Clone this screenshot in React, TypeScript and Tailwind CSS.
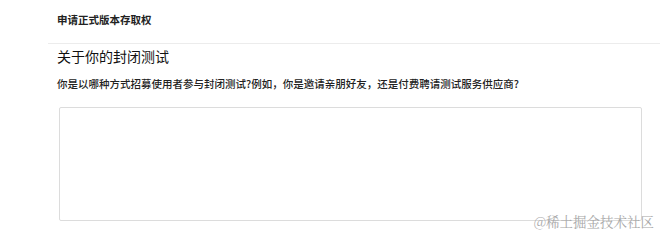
const FONT = "font-['Noto_Sans_CJK_SC','Noto_Sans',sans-serif]";

export default function App() {
  return (
    <div className={`relative h-[237px] w-[660px] overflow-hidden bg-white text-[#222] ${FONT}`}>
      <div className="flex h-[43px] items-center pb-[3px] pl-[57px]">
        <h1 className="text-[10.5px] font-bold leading-[14px]">申请正式版本存取权</h1>
      </div>
      <div className="ml-[48px] border-t border-[#ececec]" />

      <section className="pl-[57px]">
        <h2 className="mt-[2px] text-[14px] leading-[20px] text-[#111]">关于你的封闭测试</h2>
        <p className="mt-[11px] text-[10.5px] font-medium leading-[14px] text-[#222]">
          你是以哪种方式招募使用者参与封闭测试?例如，你是邀请亲朋好友，还是付费聘请测试服务供应商?
        </p>
        <textarea
          className="ml-[2px] mt-[16px] block h-[114px] w-[583px] resize-none rounded-[2px] border border-[#dcdcdc] bg-white outline-none"
          aria-label="关于你的封闭测试"
        />
      </section>

      <span className="pointer-events-none absolute bottom-[7px] right-[6px] font-['Noto_Serif_CJK_SC','Noto_Sans_CJK_SC',serif] text-[13.5px] leading-[18px] text-[#a8a8a8]">
        @稀土掘金技术社区
      </span>
    </div>
  );
}
